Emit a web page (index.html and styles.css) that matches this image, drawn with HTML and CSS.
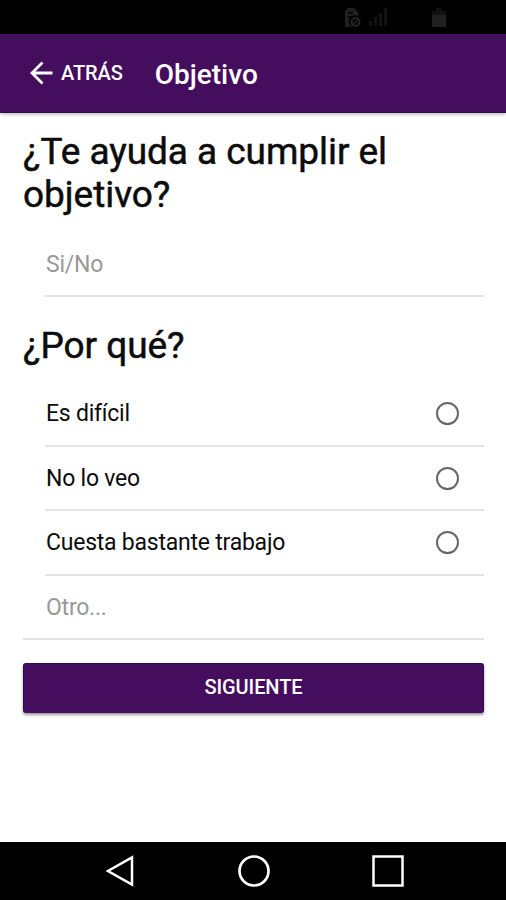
FILE: index.html
```html
<!DOCTYPE html>
<html lang="es">
<head>
<meta charset="utf-8">
<title>Objetivo</title>
<link rel="stylesheet" href="styles.css">
</head>
<body>
<div class="status">
  <svg class="sim" width="17" height="20" viewBox="0 0 17 20"><path d="M1 3l3-3h6l4 4v4a5 5 0 0 0-6 11H1z" fill="#202020"/><path d="M4 5h5M4 9h4" stroke="#000" stroke-width="1.5"/><circle cx="11.5" cy="14" r="4" fill="none" stroke="#242424" stroke-width="2"/><path d="M9 16.500l5-5" stroke="#242424" stroke-width="1.5"/></svg>
  <svg class="signal" width="19" height="18" viewBox="0 0 19 18"><path d="M1 13h3v5H1zM6 9h3v9H6zM11 5h3v13h-3zM16 0h3v18h-3z" fill="#121212"/></svg>
  <svg class="battery" width="14" height="19" viewBox="0 0 14 19"><path d="M4 0h6v3h4v4H0V3h4z" fill="#111"/><path d="M0 7h14v12H0z" fill="#202020"/></svg>
</div>
<header class="bar">
  <button class="back"><svg width="24" height="24" viewBox="0 0 24 24"><path d="M23.500 12H3M13.500 1.500L3 12l10.500 10.500" fill="none" stroke="#fff" stroke-width="2.8"/></svg><span>ATRÁS</span></button>
  <h1>Objetivo</h1>
</header>
<main>
  <h2>¿Te ayuda a cumplir el<br>objetivo?</h2>
  <div class="row first muted">Si/No</div>
  <h2 class="why">¿Por qué?</h2>
  <label class="row"><span>Es difícil</span><i class="radio"></i></label>
  <label class="row"><span>No lo veo</span><i class="radio"></i></label>
  <label class="row"><span>Cuesta bastante trabajo</span><i class="radio"></i></label>
  <div class="other muted">Otro...</div>
  <button class="next">SIGUIENTE</button>
</main>
<nav>
  <svg width="30" height="32" viewBox="0 0 30 32"><path d="M27 2.500v27L3 16z" fill="none" stroke="#fff" stroke-width="2.5"/></svg>
  <svg width="34" height="34" viewBox="0 0 34 34"><circle cx="17" cy="17" r="14.500" fill="none" stroke="#fff" stroke-width="2.7"/></svg>
  <svg width="34" height="34" viewBox="0 0 34 34"><path d="M2.500 2.500h29v29h-29z" fill="none" stroke="#fff" stroke-width="2.5"/></svg>
</nav>
</body>
</html>
```
FILE: styles.css
```css
* { box-sizing: border-box; }
body { margin: 0; height: 900px; display: flex; flex-direction: column; background: #fff; color: #0c0c0c; font-family: Roboto, sans-serif; overflow: hidden; }
button { border: 0; font: inherit; color: #fff; }
.status { height: 34px; background: #000; display: flex; align-items: flex-start; padding: 8px 0 0 344px; }
.signal { margin-left: 7px; }
.battery { margin-left: 45px; }
.bar { height: 79px; background: #450d5e; color: #fff; display: flex; align-items: center; padding-left: 29px; border-bottom: 1px solid #25104a; box-shadow: 0 1px 4px #0005; }
.back { display: flex; align-items: center; padding: 0; gap: 8px; background: none; font-size: 20px; font-weight: 500; }
.back span { line-height: 24px; padding-bottom: 1px; letter-spacing: -0.1px; }
h1 { margin: 3px 0 0 32px; font-size: 28px; font-weight: 500; line-height: 36px; }
main { flex: 1; padding: 17px 22px 0 23px; }
h2 { margin: 0; font-size: 37px; font-weight: 400; line-height: 43px; letter-spacing: -0.05px; -webkit-text-stroke: 0.5px #0c0c0c; }
.row { height: 64.5px; margin-left: 22px; padding: 1px 25px 0 1px; border-bottom: 2px solid #e4e4e4; display: flex; align-items: center; justify-content: space-between; font-size: 23px; letter-spacing: -0.23px; }
.first { margin-top: 16px; height: 65px; }
.why { margin: 27px 0 15px; }
.row.muted, .other.muted { color: #999; }
.radio { width: 23px; height: 23px; border: 2.5px solid #666; border-radius: 50%; }
.other { height: 64.5px; padding: 1px 0 0 23px; border-bottom: 2px solid #e4e4e4; display: flex; align-items: center; font-size: 23px; letter-spacing: -0.23px; }
.next { display: block; width: 100%; height: 50px; margin-top: 23px; padding: 0 0 3px; border: 1px solid #2c0b50; border-bottom: 0; border-radius: 3px; background: #450d5e; font-size: 20px; font-weight: 500; letter-spacing: -0.1px; box-shadow: 0 2px 3px #0006; }
nav { height: 58px; background: #000; display: flex; align-items: center; padding-left: 105px; }
nav svg + svg { margin-left: 101.5px; }
nav svg:last-child { margin-left: 100px; }
```
